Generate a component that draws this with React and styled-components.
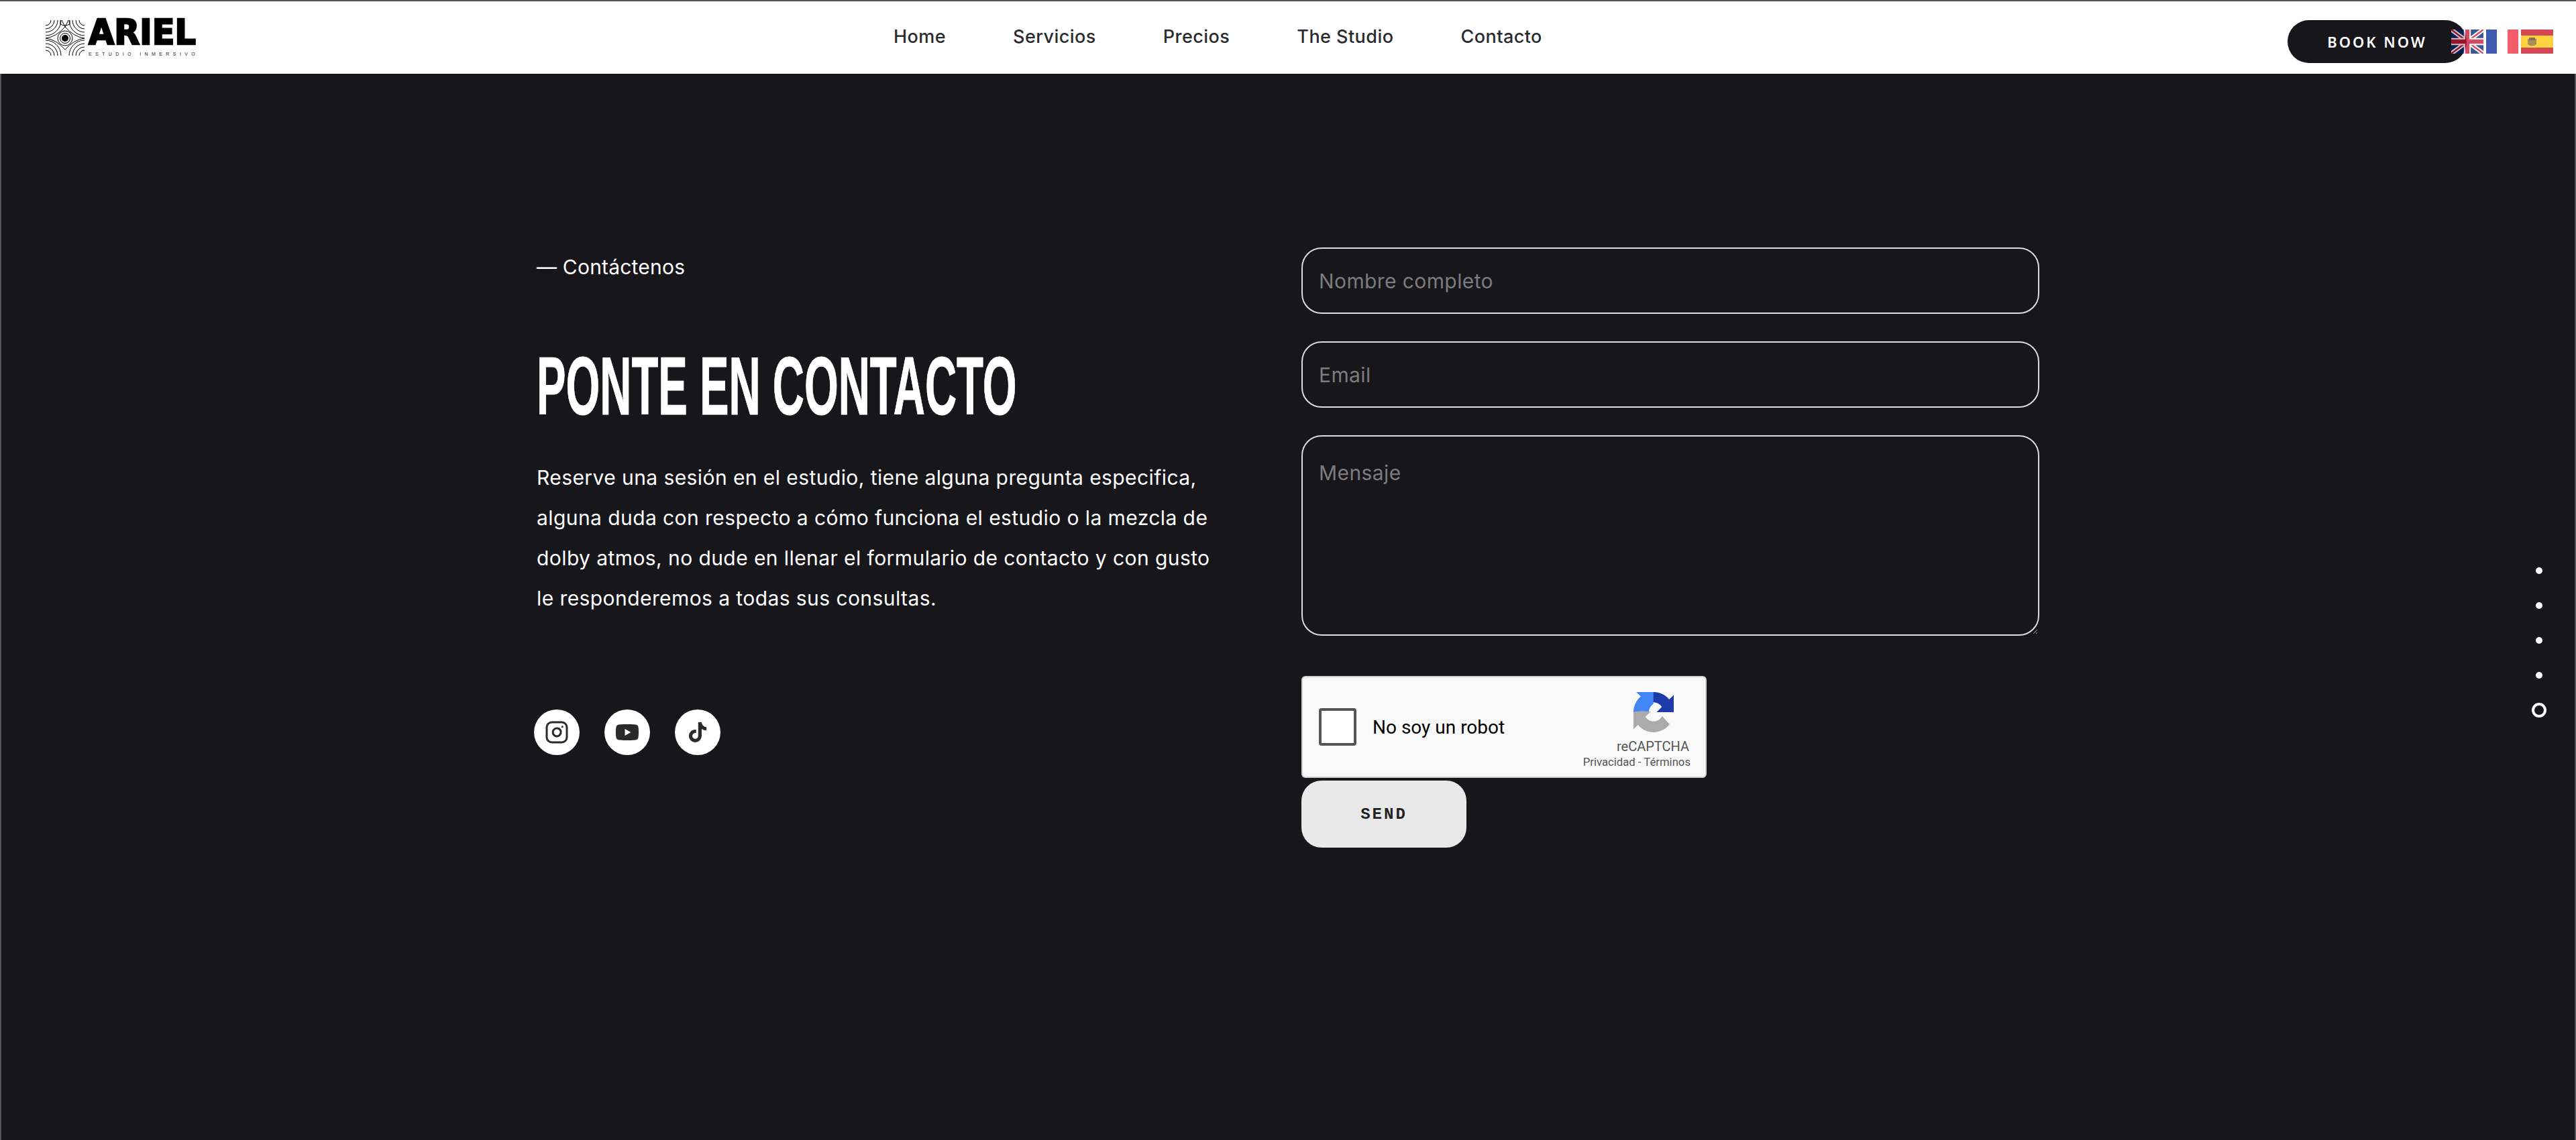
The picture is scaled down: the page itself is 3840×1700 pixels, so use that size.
import React from "react";
import styled, { createGlobalStyle } from "styled-components";
import { FaYoutube, FaTiktok } from "react-icons/fa";
import { FiInstagram } from "react-icons/fi";

const GlobalStyle = createGlobalStyle`
  * { box-sizing: border-box; }
  html, body { margin: 0; padding: 0; background: #16161b; }
  body { font-family: "Roboto", "Liberation Sans", sans-serif; overflow: hidden; }
`;

const Page = styled.div`
  position: relative;
  width: 3840px;
  height: 1700px;
  background: #16161b;
  border-top: 2px solid #555;
  overflow: hidden;
`;

const Navbar = styled.header`
  display: flex;
  align-items: flex-start;
  height: 108px;
  padding: 26px 163px 0 68px;
  background: #fff;
`;

const LogoWrap = styled.a`
  display: flex;
  gap: 6px;
  width: 226px;
  height: 60px;
  flex: none;
  color: #000;
`;

const LogoMark = styled.svg`
  display: block;
  flex: none;
  width: 58px;
  height: 58px;
`;

const LogoText = styled.div`
  display: flex;
  flex-direction: column;
  width: 162px;
`;

const LogoWord = styled.span`
  display: inline-block;
  font-family: "DejaVu Sans", sans-serif;
  font-size: 52px;
  line-height: 41px;
  font-weight: 700;
  white-space: nowrap;
  -webkit-text-stroke: 2.5px #000;
  transform: scaleX(0.95);
  transform-origin: left center;
`;

const LogoTag = styled.span`
  margin-top: 8px;
  font-family: "Liberation Sans", sans-serif;
  font-size: 7px;
  line-height: 8px;
  letter-spacing: 5.4px;
  color: #222;
  white-space: nowrap;
`;

const NavLinks = styled.nav`
  display: flex;
  gap: 100px;
  margin-left: 1038px;
  padding-top: 9px;
`;

const NavLink = styled.a`
  font-family: "Inter", sans-serif;
  font-size: 27px;
  line-height: 36px;
  font-weight: 500;
  color: #2b2b2f;
  letter-spacing: 0.45px;
`;

const BookButton = styled.button`
  margin-left: auto;
  margin-top: 2px;
  width: 267px;
  height: 64px;
  border: 0;
  border-radius: 32px;
  background: #16161b;
  color: #fff;
  font-family: "Noto Sans", sans-serif;
  font-size: 22px;
  font-weight: 600;
  letter-spacing: 3px;
`;

const Flags = styled.div`
  position: absolute;
  top: 42px;
  left: 3654px;
  display: flex;
  gap: 4px;
  opacity: 0.75;
`;

const Flag = styled.svg`
  display: block;
  width: 48px;
  height: 36px;
`;

const Main = styled.main`
  display: grid;
  grid-template-columns: 1140px 1100px;
  width: 2240px;
  margin: 0 auto;
  padding-top: 259px;
`;

const Intro = styled.section`
  padding-top: 9px;
`;

const Eyebrow = styled.div`
  font-family: "Inter", sans-serif;
  font-size: 30px;
  line-height: 40px;
  color: #fff;
  letter-spacing: 0.2px;
`;

const Heading = styled.h1`
  margin: 98px 0 0;
  font-family: "Liberation Sans", sans-serif;
  font-size: 122px;
  line-height: 120px;
  font-weight: 700;
  color: #fff;
  white-space: nowrap;
  -webkit-text-stroke: 1px #fff;
  transform: scaleX(0.535);
  transform-origin: left center;
`;

const Lead = styled.p`
  width: 1030px;
  margin: 46px 0 0;
  font-family: "Inter", sans-serif;
  font-size: 30px;
  line-height: 60px;
  color: #fff;
  letter-spacing: 0.42px;
`;

const Socials = styled.div`
  display: flex;
  gap: 37px;
  margin: 136px 0 0 -4px;
`;

const SocialLink = styled.a`
  display: flex;
  align-items: center;
  justify-content: center;
  width: 68px;
  height: 68px;
  border-radius: 50%;
  background: #fff;
  color: #2a2a2a;
  font-size: ${(p) => p.$size}px;
`;

const Form = styled.form`
  display: flex;
  flex-direction: column;
  align-items: flex-start;
`;

const fieldStyles = `
  display: block;
  width: 1100px;
  background: transparent;
  border: 2px solid #ddd;
  border-radius: 30px;
  color: #fff;
  font-family: "Inter", sans-serif;
  font-size: 30px;
  letter-spacing: 0.4px;
  outline: none;
  padding: 0 24px;
  margin-bottom: 41px;
  &::placeholder { color: #7c7c7c; opacity: 1; }
`;

const Input = styled.input`
  ${fieldStyles}
  height: 99px;
`;

const Message = styled.textarea`
  ${fieldStyles}
  height: 299px;
  padding-top: 36px;
  margin-bottom: 60px;
`;

const Captcha = styled.div`
  display: flex;
  align-items: center;
  position: relative;
  width: 604px;
  height: 152px;
  padding-left: 24px;
  background: #f9f9f9;
  border: 2px solid #d3d3d3;
  border-radius: 6px;
`;

const CaptchaBox = styled.span`
  width: 56px;
  height: 56px;
  background: #fff;
  border: 4px solid #555;
  border-radius: 4px;
`;

const CaptchaLabel = styled.span`
  margin-left: 24px;
  font-family: "Roboto", sans-serif;
  font-size: 28px;
  color: #000;
`;

const CaptchaBrand = styled.div`
  display: flex;
  flex-direction: column;
  align-items: flex-end;
  position: absolute;
  top: 22px;
  right: 22px;
  font-family: "Roboto", sans-serif;
  color: #555;
`;

const CaptchaLogo = styled.svg`
  display: block;
  width: 60px;
  height: 60px;
  margin-right: 25px;
`;

const CaptchaName = styled.span`
  margin-top: 8px;
  margin-right: 2px;
  font-size: 20px;
  line-height: 26px;
`;

const CaptchaLinks = styled.span`
  font-size: 16.7px;
  line-height: 22px;
`;

const SendButton = styled.button`
  width: 246px;
  height: 100px;
  margin-top: 4px;
  border: 0;
  border-radius: 30px;
  background: #e9e9e9;
  color: #222;
  font-family: "Liberation Mono", monospace;
  font-size: 24px;
  font-weight: 700;
  letter-spacing: 3px;
`;

const Dots = styled.div`
  position: absolute;
  top: 823px;
  left: 3774px;
  display: flex;
  flex-direction: column;
  align-items: center;
  width: 22px;
`;

const DotSlot = styled.span`
  display: flex;
  align-items: center;
  justify-content: center;
  height: 52px;
`;

const Dot = styled.span`
  display: block;
  width: ${(p) => (p.$active ? 22 : 10)}px;
  height: ${(p) => (p.$active ? 22 : 10)}px;
  border-radius: 50%;
  background: ${(p) => (p.$active ? "transparent" : "#fff")};
  border: ${(p) => (p.$active ? "4px solid #fff" : "0")};
`;

const EdgeLine = styled.div`
  position: absolute;
  top: 108px;
  bottom: 0;
  width: 2px;
  background: #555;
  ${(p) => (p.$left ? "left: 0;" : "right: 0;")}
`;

const EyeMark = () => (
  <LogoMark viewBox="0 0 58 58">
    <g fill="none" stroke="#000" strokeWidth="1">
      {[8, 13, 18, 23].map((r) => (
        <g key={r}>
          <path d={`M${r} 2 A${r} ${r} 0 0 1 0 ${2 + r}`} />
          <path d={`M${58 - r} 2 A${r} ${r} 0 0 0 58 ${2 + r}`} />
          <path d={`M${r} 55 A${r} ${r} 0 0 0 0 ${55 - r}`} />
          <path d={`M${58 - r} 55 A${r} ${r} 0 0 1 58 ${55 - r}`} />
        </g>
      ))}
      <path d="M0 29 Q16 27 29 12 Q42 27 58 29 Q42 31 29 46 Q16 31 0 29Z" />
      <path d="M22 2 L22 8 Q29 12 36 8 L36 2 M24 2 L29 12 L34 2" />
      <circle cx="29" cy="29" r="11" />
    </g>
    <circle cx="29" cy="29" r="5" fill="#000" />
    <circle cx="29" cy="29" r="7.5" fill="none" stroke="#000" strokeWidth="1" />
  </LogoMark>
);

const FlagUK = () => (
  <Flag viewBox="0 0 60 45" preserveAspectRatio="none">
    <rect width="60" height="45" fill="#012169" />
    <path d="M0 0L60 45M60 0L0 45" stroke="#fff" strokeWidth="8" />
    <path d="M0 0L60 45M60 0L0 45" stroke="#c8102e" strokeWidth="3" />
    <path d="M30 0V45M0 22.5H60" stroke="#fff" strokeWidth="13" />
    <path d="M30 0V45M0 22.5H60" stroke="#c8102e" strokeWidth="8" />
  </Flag>
);

const FlagFR = () => (
  <Flag viewBox="0 0 3 2" preserveAspectRatio="none">
    <rect width="1" height="2" fill="#002395" />
    <rect x="1" width="1" height="2" fill="#fff" />
    <rect x="2" width="1" height="2" fill="#ed2939" />
  </Flag>
);

const FlagES = () => (
  <Flag viewBox="0 0 48 36">
    <rect width="48" height="36" fill="#c60b1e" />
    <rect y="9" width="48" height="18" fill="#ffc400" />
    <path d="M10 14h13v8q-6.500 5-13 0z" fill="#8a6a1f" />
    <rect x="12" y="12" width="9" height="4" fill="#5a3d1a" />
  </Flag>
);

const links = ["Home", "Servicios", "Precios", "The Studio", "Contacto"];

const App = () => {
  return (
    <Page>
      <GlobalStyle />
      <Navbar>
        <LogoWrap>
          <EyeMark />
          <LogoText>
            <LogoWord>ARIEL</LogoWord>
            <LogoTag>ESTUDIO INMERSIVO</LogoTag>
          </LogoText>
        </LogoWrap>
        <NavLinks>
          {links.map((l) => (
            <NavLink key={l}>{l}</NavLink>
          ))}
        </NavLinks>
        <BookButton>BOOK NOW</BookButton>
      </Navbar>
      <Flags>
        <FlagUK />
        <FlagFR />
        <FlagES />
      </Flags>

      <Main>
        <Intro>
          <Eyebrow>— Contáctenos</Eyebrow>
          <Heading>PONTE EN CONTACTO</Heading>
          <Lead>
            Reserve una sesión en el estudio, tiene alguna pregunta especifica,
            alguna duda con respecto a cómo funciona el estudio o la mezcla de
            dolby atmos, no dude en llenar el formulario de contacto y con gusto
            le responderemos a todas sus consultas.
          </Lead>
          <Socials>
            <SocialLink $size={36}>
              <FiInstagram />
            </SocialLink>
            <SocialLink $size={36}>
              <FaYoutube />
            </SocialLink>
            <SocialLink $size={30}>
              <FaTiktok />
            </SocialLink>
          </Socials>
        </Intro>

        <Form>
          <Input placeholder="Nombre completo" />
          <Input placeholder="Email" />
          <Message placeholder="Mensaje" />
          <Captcha>
            <CaptchaBox />
            <CaptchaLabel>No soy un robot</CaptchaLabel>
            <CaptchaBrand>
              <CaptchaLogo viewBox="0 0 64 64">
                <path
                  fill="#1c3aa9"
                  d="M64 31.955l-.033-1.37V4.687l-7.16 7.16C50.948 4.674 42.033.093 32.05.093c-10.4 0-19.622 4.96-25.458 12.64l11.736 11.86a15.55 15.55 0 0 1 4.754-5.334c2.05-1.6 4.952-2.906 8.968-2.906.485 0 .86.057 1.135.163 4.976.393 9.288 3.14 11.828 7.124l-8.307 8.307c10.522-.04 22.4-.066 27.295.006"
                />
                <path
                  fill="#4285f4"
                  d="M31.862.094l-1.37.033H4.594l7.16 7.16C4.58 13.147 0 22.06 0 32.046c0 .7.02 1.3.07 2h24.3c-.07-.6-.11-1.3-.11-2 0-.485.057-.86.163-1.135.393-4.976 3.14-9.288 7.124-11.828z"
                />
                <path
                  fill="#ababab"
                  d="M.001 32.045l.033 1.37v25.898l7.16-7.16c5.86 7.173 14.774 11.754 24.76 11.754 10.4 0 19.622-4.96 25.458-12.64L45.676 38.41a15.55 15.55 0 0 1-4.754 5.334c-2.05 1.6-4.952 2.906-8.968 2.906-.485 0-.86-.057-1.135-.163-4.976-.393-9.288-3.14-11.828-7.124l8.307-8.307C16.776 30.096 4.898 30.122.001 32.05"
                />
              </CaptchaLogo>
              <CaptchaName>reCAPTCHA</CaptchaName>
              <CaptchaLinks>Privacidad - Términos</CaptchaLinks>
            </CaptchaBrand>
          </Captcha>
          <SendButton type="button">SEND</SendButton>
        </Form>
      </Main>

      <Dots>
        {[0, 1, 2, 3, 4].map((i) => (
          <DotSlot key={i}>
            <Dot $active={i === 4} />
          </DotSlot>
        ))}
      </Dots>
      <EdgeLine $left />
      <EdgeLine />
    </Page>
  );
};

export default App;
